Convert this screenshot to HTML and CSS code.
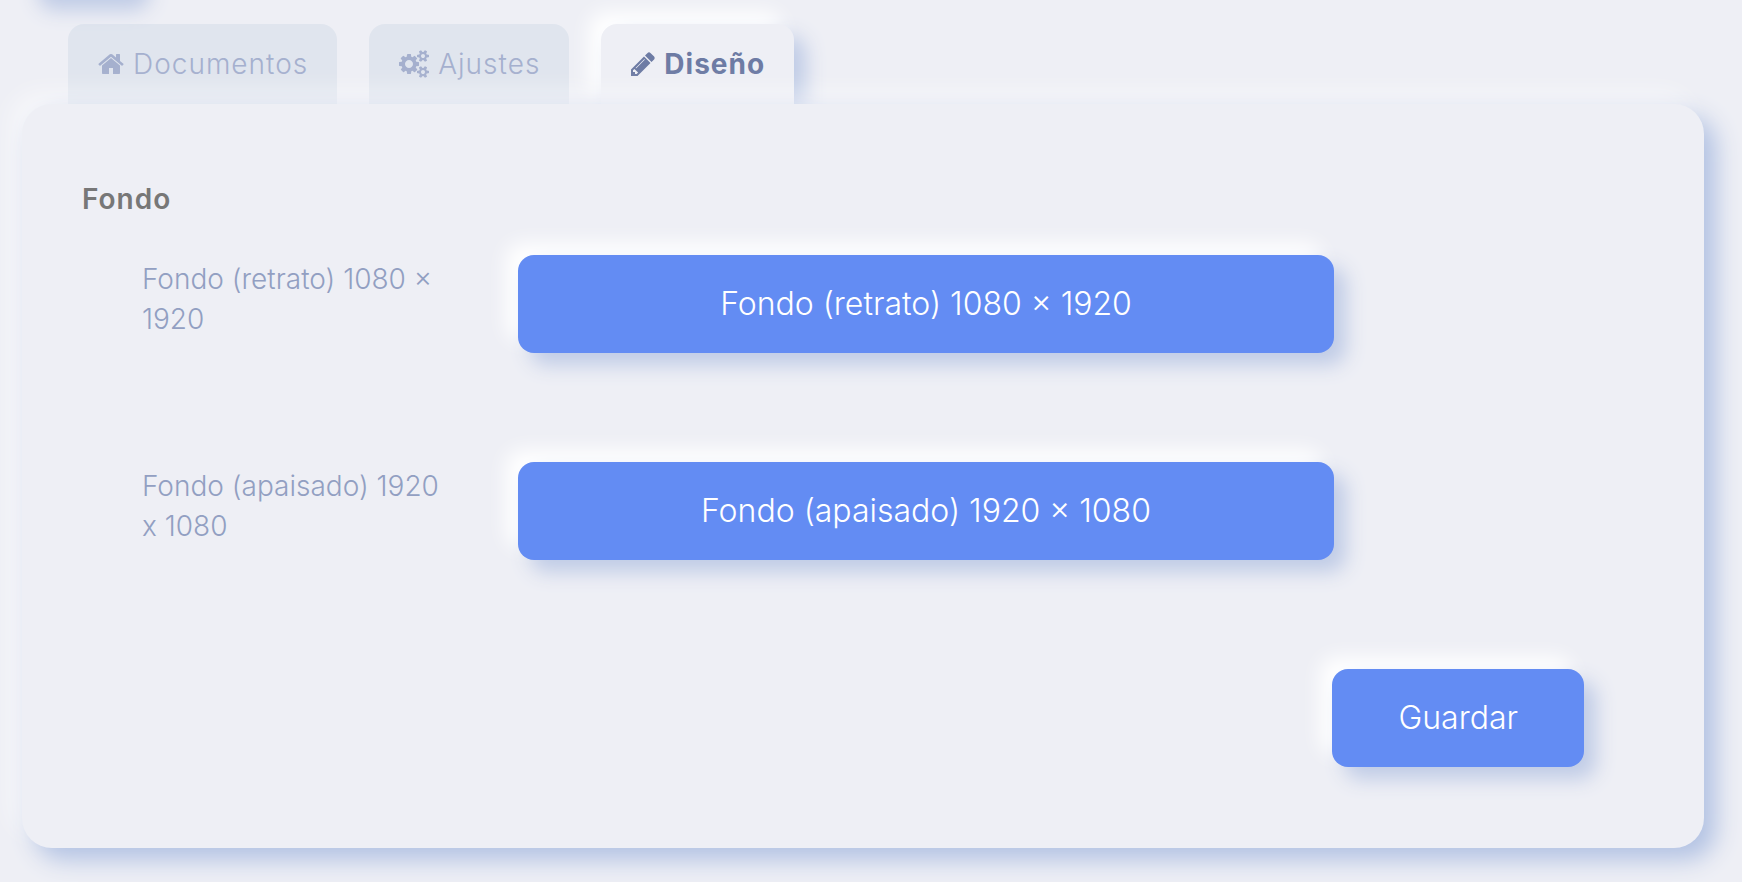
FILE: index.html
```html
<!DOCTYPE html>
<html lang="es">
<head>
<meta charset="utf-8">
<meta name="viewport" content="width=device-width, initial-scale=1">
<title>Diseño</title>
<link rel="stylesheet" href="styles.css">
</head>
<body>
<div class="page">
  <div class="toolbar-edge"></div>
  <nav class="tabs">
    <a class="tab" href="#documentos">
      <svg class="icon icon-home" viewBox="64 0 1664 1792" aria-hidden="true"><path d="M1472 992v480q0 26-19 45t-45 19h-384v-384h-256v384h-384q-26 0-45-19t-19-45v-480q0-1 .5-3t.5-3l575-474 575 474q1 2 1 6zm223-69l-62 74q-8 9-21 11h-3q-13 0-21-7l-692-577-692 577q-12 8-24 7-13-2-21-11l-62-74q-8-10-7-23.5t11-21.5l719-599q32-26 76-26t76 26l244 204v-195q0-14 9-23t23-9h192q14 0 23 9t9 23v408l219 182q10 8 11 21.5t-7 23.5z"/></svg>
      <span>Documentos</span>
    </a>
    <a class="tab" href="#ajustes">
      <svg class="icon icon-cogs" viewBox="-64 0 1920 1792" aria-hidden="true"><path d="M832 896q0-106-75-181t-181-75-181 75-75 181 75 181 181 75 181-75 75-181zm768 512q0-52-38-90t-90-38-90 38-38 90q0 53 37.500 90.500t90.500 37.500 90.500-37.500 37.500-90.500zm0-1024q0-52-38-90t-90-38-90 38-38 90q0 53 37.500 90.500t90.500 37.500 90.500-37.500 37.500-90.500zm-384 421v185q0 10-7 19.500t-16 10.500l-155 24q-11 35-32 76 34 48 90 115 7 11 7 20 0 12-7 19-23 30-82.500 89.500t-78.500 59.500q-11 0-21-7l-115-90q-37 19-77 31-11 108-23 155-7 24-30 24h-186q-11 0-20-7.500t-10-17.500l-23-153q-34-10-75-31l-118 89q-7 7-20 7-11 0-21-8-144-133-144-160 0-9 7-19 10-14 41-53t47-61q-23-44-35-82l-152-24q-10-1-17-9.500t-7-19.500v-185q0-10 7-19.500t16-10.500l155-24q11-35 32-76-34-48-90-115-7-11-7-20 0-12 7-20 22-30 82-89t79-59q11 0 21 7l115 90q34-18 77-32 11-108 23-154 7-24 30-24h186q11 0 20 7.500t10 17.500l23 153q34 10 75 31l118-89q8-7 20-7 11 0 21 8 144 133 144 160 0 8-7 19-12 16-42 54t-45 60q23 48 34 82l152 23q10 2 17 10.500t7 19.500zm640 533v140q0 16-149 31-12 27-30 52 51 113 51 138 0 4-4 7-122 71-124 71-8 0-46-47t-52-68q-20 2-30 2t-30-2q-14 21-52 68t-46 47q-2 0-124-71-4-3-4-7 0-25 51-138-18-25-30-52-149-15-149-31v-140q0-16 149-31 13-29 30-52-51-113-51-138 0-4 4-7 4-2 35-20t59-34 30-16q8 0 46 46.500t52 67.500q20-2 30-2t30 2q51-71 92-112l6-2q4 0 124 70 4 3 4 7 0 25-51 138 17 23 30 52 149 15 149 31zm0-1024v140q0 16-149 31-12 27-30 52 51 113 51 138 0 4-4 7-122 71-124 71-8 0-46-47t-52-68q-20 2-30 2t-30-2q-14 21-52 68t-46 47q-2 0-124-71-4-3-4-7 0-25 51-138-18-25-30-52-149-15-149-31v-140q0-16 149-31 13-29 30-52-51-113-51-138 0-4 4-7 4-2 35-20t59-34 30-16q8 0 46 46.500t52 67.500q20-2 30-2t30 2q51-71 92-112l6-2q4 0 124 70 4 3 4 7 0 25-51 138 17 23 30 52 149 15 149 31z"/></svg>
      <span>Ajustes</span>
    </a>
    <a class="tab tab-active" href="#diseno" aria-current="page">
      <svg class="icon icon-pencil" viewBox="128 0 1536 1792" aria-hidden="true"><path d="M491 1536l91-91-235-235-91 91v107h128v128h107zm523-928q0-22-22-22-10 0-17 7l-542 542q-7 7-7 17 0 22 22 22 10 0 17-7l542-542q7-7 7-17zm-54-192l416 416-832 832h-416v-416zm683 96q0 53-37 90l-166 166-416-416 166-165q36-38 90-38 53 0 91 38l235 234q37 39 37 91z"/></svg>
      <span>Diseño</span>
    </a>
  </nav>
  <main class="panel">
    <h2 class="section-title">Fondo</h2>
    <form class="form">
      <div class="field">
        <label class="field-label" for="portrait">Fondo (retrato) 1080 × 1920</label>
        <button class="button" id="portrait" type="button">Fondo (retrato) 1080 × 1920</button>
      </div>
      <div class="field">
        <label class="field-label" for="landscape">Fondo (apaisado) 1920 x 1080</label>
        <button class="button" id="landscape" type="button">Fondo (apaisado) 1920 × 1080</button>
      </div>
      <div class="actions">
        <button class="button button-save" type="submit">Guardar</button>
      </div>
    </form>
  </main>
</div>
</body>
</html>
```
FILE: styles.css
```css
* {
  box-sizing: border-box;
}

body {
  margin: 0;
  background: #eeeff5;
  font-family: Inter, "Liberation Sans", sans-serif;
  font-size: 28px;
  font-weight: 300;
  line-height: 40px;
}

.page {
  position: relative;
  overflow: hidden;
  padding: 24px 38px 34px 22px;
}

/* Lower edge of the raised toolbar button above the tabs */
.toolbar-edge {
  position: absolute;
  top: -80px;
  left: 26px;
  width: 112px;
  height: 80px;
  border-radius: 16px;
  box-shadow: 12px 10px 20px #bfcbe6;
}

.tabs {
  display: flex;
  gap: 32px;
  padding: 0 46px;
}

.tab {
  display: flex;
  align-items: center;
  gap: 9px;
  height: 80px;
  padding: 0 29px 0 30px;
  border-radius: 16px 16px 0 0;
  background: #e0e5ee;
  color: #a5b0ce;
  letter-spacing: 1px;
  text-decoration: none;
}

.tab-active {
  background: #eeeff5;
  box-shadow: 12px 12px 20px #bfcbe6, -12px -12px 20px #fff;
  color: #6d7ba4;
  font-weight: 700;
}

.icon {
  height: 28px;
  fill: currentColor;
}

.icon-home {
  width: 26px;
}

.icon-cogs {
  width: 30px;
}

.icon-pencil {
  width: 24px;
}

.panel {
  position: relative;
  padding: 75px 60px 81px;
  border-radius: 30px;
  background: #eeeff5;
  box-shadow: 12px 12px 24px #b2c2e3, -12px -12px 24px rgba(255, 255, 255, 0.5);
}

.section-title {
  margin: 0;
  color: #777;
  font-size: 28px;
  font-weight: 600;
  letter-spacing: 1px;
}

.form {
  display: grid;
  gap: 109px;
  padding: 36px 60px 0;
}

.field {
  display: grid;
  grid-template-columns: 376fr 816fr 250fr;
  align-items: start;
}

.field-label {
  padding: 4px 60px 0 0;
  color: #929fc2;
}

.button {
  padding: 29px 30px;
  border: 0;
  border-radius: 16px;
  background: #638cf3;
  box-shadow: 12px 12px 20px #bfcbe6, -12px -12px 20px #fff;
  color: #fff;
  font-family: inherit;
  font-size: 32px;
  font-weight: inherit;
  line-height: 40px;
}

.actions {
  display: flex;
  justify-content: flex-end;
}

.button-save {
  padding-right: 66px;
  padding-left: 66px;
}
```
